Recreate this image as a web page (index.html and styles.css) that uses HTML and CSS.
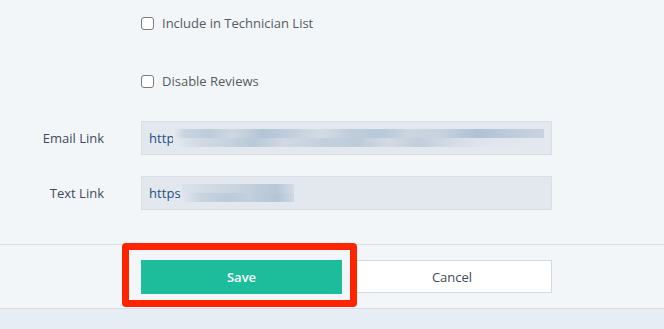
FILE: index.html
```html
<!DOCTYPE html>
<html>
<head>
<meta charset="utf-8">
<link rel="stylesheet" href="styles.css">
</head>
<body>
<div class="page">
  <div class="form">
    <div class="row check-row first">
      <div class="label"></div>
      <label class="check"><span class="box"></span><span>Include in Technician List</span></label>
    </div>
    <div class="row check-row second">
      <div class="label"></div>
      <label class="check"><span class="box"></span><span>Disable Reviews</span></label>
    </div>
    <div class="row field-row email">
      <div class="label">Email Link</div>
      <div class="input"><span class="val">http</span><span class="blur blur-long"><i class="b1"></i><i class="b2"></i></span></div>
    </div>
    <div class="row field-row text">
      <div class="label">Text Link</div>
      <div class="input"><span class="val">https</span><span class="blur blur-short"><i class="b1"></i><i class="b2"></i></span></div>
    </div>
  </div>
  <div class="actions">
    <div class="label"></div>
    <div class="buttons">
      <div class="save-wrap"><button class="btn save">Save</button></div>
      <button class="btn cancel">Cancel</button>
    </div>
  </div>
  <div class="footer"></div>
</div>
</body>
</html>
```
FILE: styles.css
```css
html, body {
  margin: 0;
  padding: 0;
  background: #f3f6f9;
  font-family: "Open Sans", "Noto Sans", sans-serif;
  font-size: 13px;
}
.page {
  width: 664px;
  height: 329px;
  overflow: hidden;
  display: flex;
  flex-direction: column;
}
.form {
  padding-top: 13px;
}
.row {
  display: grid;
  grid-template-columns: 104px 411px;
  column-gap: 37px;
  align-items: center;
}
.check-row {
  height: 20px;
}
.check-row.second {
  margin-top: 38px;
}
.label {
  text-align: right;
  color: #3d4a5b;
}
.check {
  display: flex;
  align-items: center;
  color: #555b62;
}
.box {
  width: 11px;
  height: 11px;
  border: 1px solid #7a7a7a;
  border-radius: 3px;
  background: #fff;
  margin-right: 8px;
}
.field-row {
  margin-top: 30px;
}
.field-row.text {
  margin-top: 21px;
}
.input {
  height: 32px;
  border: 1px solid #d8dee5;
  background: #e3e8ee;
  display: flex;
  align-items: center;
  padding-left: 7px;
  color: #1d4d87;
}
.val {
  letter-spacing: 0.1px;
}
.blur {
  display: flex;
  flex-direction: column;
  height: 18px;
}
.blur i {
  display: block;
  height: 9px;
}
.blur-long {
  width: 371px;
  margin-left: -2px;
}
.blur-long .b1 {
  background: linear-gradient(90deg,#e6ebf0 0,#c9d4df 3%,#bccbdb 10%,#cfd8e2 16%,#b3c4d6 24%,#c2cfdc 32%,#d3dce5 40%,#bfcddb 48%,#b8c8d8 56%,#cbd6e0 64%,#c6d2de 72%,#afc1d5 82%,#bccbda 90%,#c8d3df 100%);
}
.blur-long .b2 {
  background: linear-gradient(90deg,#e4e9ef 0,#d3dce5 6%,#c7d3df 14%,#b9c9d9 22%,#d0d9e3 30%,#c4d0dd 40%,#bdcbda 50%,#d2dbe4 58%,#c1cedb 66%,#d5dde6 76%,#e0e6ec 86%,#e3e8ee 100%);
}
.blur-short {
  width: 112px;
  margin-left: 1px;
}
.blur-short .b1 {
  background: linear-gradient(90deg,#dbe2ea 0,#d3dbe4 20%,#cbd5e0 45%,#c0cdda 65%,#b8c8d8 85%,#d4dce5 100%);
}
.blur-short .b2 {
  background: linear-gradient(90deg,#e0e6ec 0,#c7d2de 18%,#bdcbd9 40%,#c2cfdc 60%,#b4c5d6 85%,#cfd8e2 100%);
}
.actions {
  margin-top: 34px;
  border-top: 1px solid #d9dee4;
  border-bottom: 1px solid #d9dee4;
  display: grid;
  grid-template-columns: 104px 411px;
  column-gap: 37px;
  padding: 15px 0 14px;
}
.buttons {
  display: flex;
  gap: 10px;
}
.btn {
  height: 34px;
  font-family: "Open Sans", "Noto Sans", sans-serif;
  font-size: 13px;
  border-radius: 0;
  margin: 0;
  padding: 0;
  cursor: pointer;
}
.save-wrap {
  position: relative;
  width: 201px;
}
.save-wrap::after {
  content: "";
  position: absolute;
  left: -19px;
  right: -15px;
  top: -17px;
  bottom: -13px;
  border: 7px solid #ff2400;
  border-radius: 4px;
}
.save {
  width: 201px;
  background: #1dbc9b;
  border: none;
  color: #fff;
  font-weight: 600;
}
.cancel {
  width: 200px;
  height: 33px;
  background: #fff;
  border: 1px solid #d3d9e0;
  color: #3d4a5b;
}
.footer {
  flex: 1;
  background: #e7edf4;
}
```
